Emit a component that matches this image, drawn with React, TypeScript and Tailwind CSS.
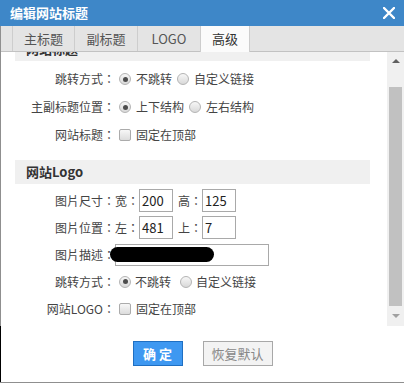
const FONT = "font-['Noto_Sans_CJK_TC','Noto_Sans',sans-serif]";

function Radio({ checked }: { checked?: boolean }) {
  return (
    <span className="w-[12px] h-[12px] rounded-full border border-[#b4b4b4] bg-linear-to-b from-[#f7f7f7] to-[#d9d9d9] flex items-center justify-center shrink-0">
      {checked && <span className="w-[5px] h-[5px] rounded-full bg-[#4d4d4d]" />}
    </span>
  );
}

function Checkbox() {
  return (
    <span className="block w-[12px] h-[12px] rounded-[2px] border border-[#ababab] bg-linear-to-b from-[#f7f7f7] to-[#dcdcdc] shrink-0" />
  );
}

function Row({ label, h, children }: { label: string; h: string; children: React.ReactNode }) {
  return (
    <div className={`flex items-center ${h}`}>
      <span className="w-[100px] text-right shrink-0 whitespace-nowrap">{label}</span>
      {children}
    </div>
  );
}

function Box({ value }: { value: string }) {
  return (
    <span className="w-[34px] h-[23px] border border-[#a9a9a9] bg-white flex items-center pl-[2px] text-[13px] text-[#222]">
      {value}
    </span>
  );
}

const tabs = [
  { name: "主标题", w: "w-[62px]" },
  { name: "副标题", w: "w-[63px]" },
  { name: "LOGO", w: "w-[63px]" },
];

export default function App() {
  return (
    <div className={`w-[404px] h-[383px] bg-white flex flex-col ${FONT}`}>
      {/* Title bar */}
      <div className="h-[26px] shrink-0 bg-[#3e87c8] flex items-center justify-between pl-[10px] pr-[9px] text-white font-bold text-[13px]">
        <span>编辑网站标题</span>
        <svg width="12" height="12" viewBox="0 0 12 12">
          <path d="M1 1 L11 11 M11 1 L1 11" stroke="white" strokeWidth="2.4" strokeLinecap="round" />
        </svg>
      </div>

      <div className="flex-1 flex flex-col border-l border-b border-[#8f8f8f] min-h-0">
        {/* Tabs */}
        <div className="h-[26px] shrink-0 flex bg-[#e4e4e4] border-b border-[#c2c2c2] pl-[11px] text-[13px] text-[#555]">
          {tabs.map((t) => (
            <div key={t.name} className={`${t.w} border-l border-[#cdcdcd] flex items-center justify-center`}>
              {t.name}
            </div>
          ))}
          <div className="w-[50px] h-[26px] -mb-px border-x border-[#cdcdcd] bg-[#fbfbfb] flex items-center justify-center text-[#333]">
            高级
          </div>
        </div>

        {/* Scroll area */}
        <div className="h-[274px] shrink-0 flex">
          <div className="flex-1 overflow-hidden pl-[14px] text-[12px] text-[#444]">
            <div className="w-[355px] -mt-[15px]">
              <div className="h-[24px] bg-[#f0f0f0] pl-[11px] flex items-center font-bold text-[13px] text-[#333]">
                网站标题
              </div>
              <div className="mt-[4px]">
                <Row label="跳转方式：" h="h-[28px]">
                  <span className="ml-[4px]"><Radio checked /></span>
                  <span className="ml-[5px]">不跳转</span>
                  <span className="ml-[5px]"><Radio /></span>
                  <span className="ml-[5px]">自定义链接</span>
                </Row>
                <Row label="主副标题位置：" h="h-[28px]">
                  <span className="ml-[4px]"><Radio checked /></span>
                  <span className="ml-[5px]">上下结构</span>
                  <span className="ml-[5px]"><Radio /></span>
                  <span className="ml-[5px]">左右结构</span>
                </Row>
                <Row label="网站标题：" h="h-[28px]">
                  <span className="ml-[4px]"><Checkbox /></span>
                  <span className="ml-[5px]">固定在顶部</span>
                </Row>
              </div>

              <div className="mt-[11px] h-[24px] bg-[#f0f0f0] pl-[11px] flex items-center font-bold text-[13px] text-[#333]">
                网站Logo
              </div>
              <div className="mt-[3px]">
                <Row label="图片尺寸：" h="h-[27px]">
                  <span>宽：</span>
                  <Box value="200" />
                  <span className="ml-[5px]">高：</span>
                  <Box value="125" />
                </Row>
                <Row label="图片位置：" h="h-[27px]">
                  <span>左：</span>
                  <Box value="481" />
                  <span className="ml-[5px]">上：</span>
                  <Box value="7" />
                </Row>
                <Row label="图片描述：" h="h-[27px]">
                  <span className="relative w-[154px] h-[22px] border border-[#a9a9a9] bg-white">
                    <span className="absolute -left-[6px] top-[2px] w-[104px] h-[15px] rounded-full bg-black" />
                  </span>
                </Row>
                <Row label="跳转方式：" h="h-[27px]">
                  <span className="ml-[4px]"><Radio checked /></span>
                  <span className="ml-[4px]">不跳转</span>
                  <span className="ml-[9px]"><Radio /></span>
                  <span className="ml-[4px]">自定义链接</span>
                </Row>
                <Row label="网站LOGO：" h="h-[27px]">
                  <span className="ml-[4px]"><Checkbox /></span>
                  <span className="ml-[5px]">固定在顶部</span>
                </Row>
              </div>
            </div>
          </div>

          {/* Scrollbar */}
          <div className="w-[17px] shrink-0 bg-[#f0f0f0] flex flex-col">
            <div className="h-[18px] flex items-center justify-center">
              <span className="w-0 h-0 border-x-[4px] border-x-transparent border-b-[4px] border-b-[#606060]" />
            </div>
            <div className="mt-[17px] mx-[2px] h-[219px] bg-[#c1c1c1]" />
            <div className="flex-1 flex items-center justify-center">
              <span className="w-0 h-0 border-x-[4px] border-x-transparent border-t-[4px] border-t-[#a0a0a0]" />
            </div>
          </div>
        </div>

        {/* Footer */}
        <div className="flex-1 -ml-px border-l border-black flex justify-center gap-[20px] pt-[15px]">
          <div className="w-[50px] h-[25px] bg-[#3e98f1] border border-[#1f6fc2] text-white font-bold text-[13px] flex items-center justify-center">
            确 定
          </div>
          <div className="w-[70px] h-[25px] bg-[#f3f3f3] border border-[#a8a8a8] text-[#888] text-[13px] flex items-center justify-center">
            恢复默认
          </div>
        </div>
      </div>
    </div>
  );
}
